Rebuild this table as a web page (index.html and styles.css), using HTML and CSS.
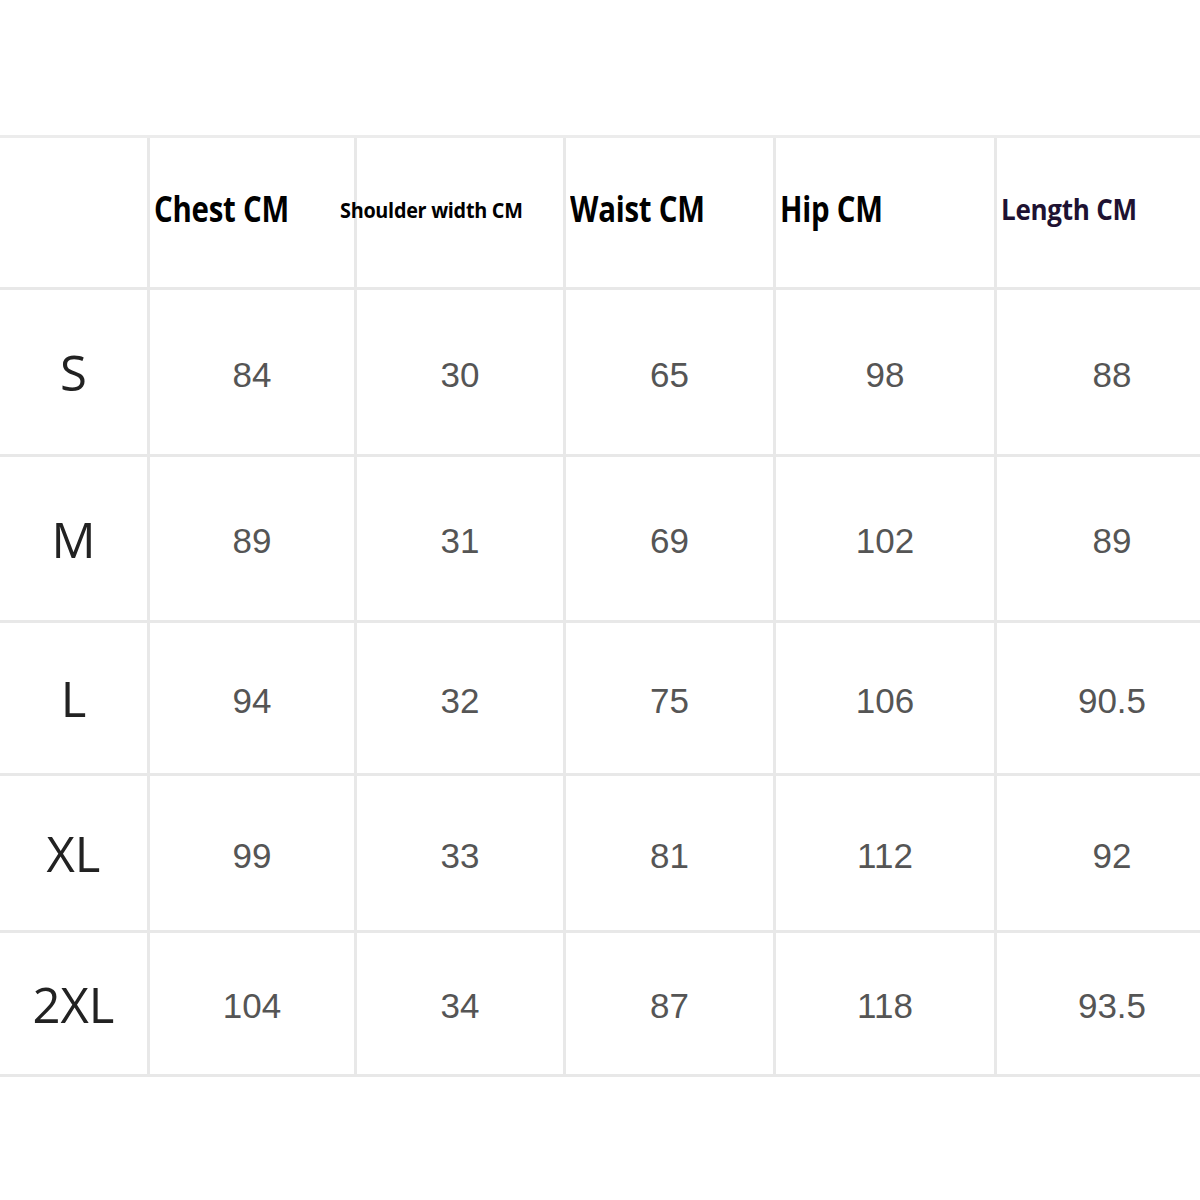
FILE: index.html
```html
<!DOCTYPE html>
<html lang="en">
<head>
<meta charset="utf-8">
<title>Size chart</title>
<link rel="stylesheet" href="styles.css">
</head>
<body>
<div class="page">
  <div class="chart">
    <div class="cell head corner"></div>
    <div class="cell head"><span class="h h-chest">Chest CM</span></div>
    <div class="cell head"><span class="h h-shoulder">Shoulder width CM</span></div>
    <div class="cell head"><span class="h h-waist">Waist CM</span></div>
    <div class="cell head"><span class="h h-hip">Hip CM</span></div>
    <div class="cell head last"><span class="h h-length">Length CM</span></div>

    <div class="cell size">S</div>
    <div class="cell num">84</div>
    <div class="cell num">30</div>
    <div class="cell num">65</div>
    <div class="cell num">98</div>
    <div class="cell num last">88</div>

    <div class="cell size">M</div>
    <div class="cell num">89</div>
    <div class="cell num">31</div>
    <div class="cell num">69</div>
    <div class="cell num">102</div>
    <div class="cell num last">89</div>

    <div class="cell size">L</div>
    <div class="cell num">94</div>
    <div class="cell num">32</div>
    <div class="cell num">75</div>
    <div class="cell num">106</div>
    <div class="cell num last">90.5</div>

    <div class="cell size">XL</div>
    <div class="cell num">99</div>
    <div class="cell num">33</div>
    <div class="cell num">81</div>
    <div class="cell num">112</div>
    <div class="cell num last">92</div>

    <div class="cell size">2XL</div>
    <div class="cell num">104</div>
    <div class="cell num">34</div>
    <div class="cell num">87</div>
    <div class="cell num">118</div>
    <div class="cell num last">93.5</div>
  </div>
</div>
</body>
</html>
```
FILE: styles.css
```css
html, body {
  margin: 0;
  padding: 0;
  background: #ffffff;
}
body {
  width: 1200px;
  height: 1200px;
  overflow: hidden;
}
.page {
  padding-top: 135px;
  width: 1230px;
}
.chart {
  display: grid;
  grid-template-columns: 150px 207px 209px 210px 221px 230px;
  grid-template-rows: 152px 167px 166px 153px 157px 144px;
  border-top: 3px solid #ececec;
}
.cell {
  box-sizing: border-box;
  border-right: 3px solid #e8e8e8;
  border-bottom: 3px solid #e8e8e8;
  display: flex;
  align-items: center;
  justify-content: center;
}
.cell.last {
  border-right: none;
}
.head {
  justify-content: flex-start;
  padding-left: 4px;
  padding-bottom: 8px;
}
.h {
  display: inline-block;
  font-family: "Open Sans", "Liberation Sans", sans-serif;
  font-weight: 700;
  color: #000000;
  white-space: nowrap;
  line-height: 1;
  transform-origin: left center;
  letter-spacing: -0.3px;
}
.h-chest, .h-waist, .h-hip {
  font-size: 35px;
  transform: scaleX(0.84);
}
.h-shoulder {
  font-size: 22px;
  margin-left: -21px;
  transform: scaleX(0.9);
}
.h-length {
  font-size: 28px;
  color: #1e1232;
  transform: scaleX(0.93);
}
.size {
  font-family: "Open Sans", "Liberation Sans", sans-serif;
  font-weight: 500;
  font-size: 49px;
  color: #222222;
}
.num {
  font-family: "Liberation Sans", Arial, sans-serif;
  font-size: 35px;
  color: #555555;
  padding-top: 5px;
}
```
